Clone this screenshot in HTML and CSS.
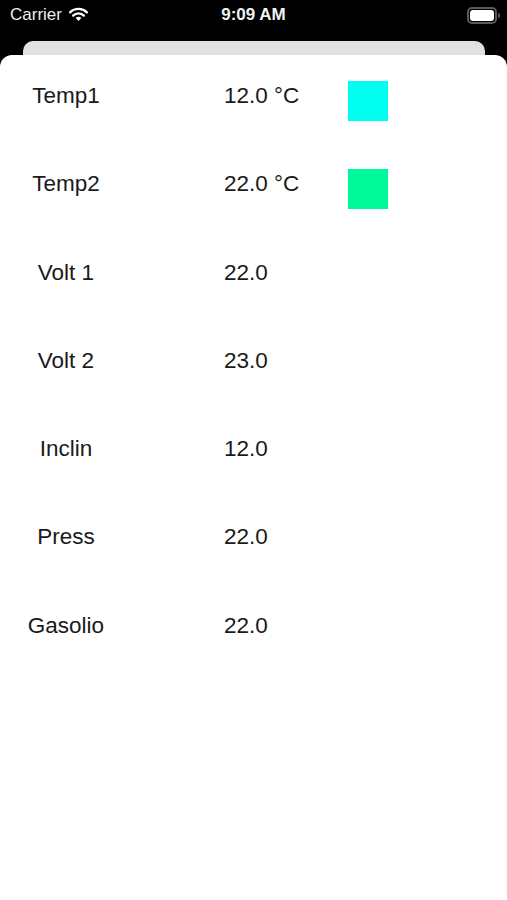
FILE: index.html
```html
<!DOCTYPE html>
<html>
<head>
<meta charset="utf-8">
<link rel="stylesheet" href="styles.css">
</head>
<body>
<div class="status">
  <div class="status-left">
    <span class="carrier">Carrier</span>
    <svg class="wifi" width="21" height="16" viewBox="0 0 20 15">
      <path d="M10 14.2 L7.3 11.4 A3.9 3.9 0 0 1 12.7 11.4 Z" fill="#fff"/>
      <path d="M4.9 9 A7.3 7.3 0 0 1 15.1 9" stroke="#fff" stroke-width="2.2" fill="none" stroke-linecap="round"/>
      <path d="M2 5.9 A11.4 11.4 0 0 1 18 5.9" stroke="#fff" stroke-width="2.2" fill="none" stroke-linecap="round"/>
    </svg>
  </div>
  <span class="time">9:09 AM</span>
  <div class="battery"><div class="battery-body"><div class="battery-fill"></div></div><div class="battery-nub"></div></div>
</div>
<div class="sheet-back"></div>
<div class="sheet">
  <div class="list">
    <div class="row"><span class="label">Temp1</span><span class="value">12.0 °C</span><span class="swatch cyan"></span></div>
    <div class="row"><span class="label">Temp2</span><span class="value">22.0 °C</span><span class="swatch green"></span></div>
    <div class="row"><span class="label">Volt 1</span><span class="value">22.0</span></div>
    <div class="row"><span class="label">Volt 2</span><span class="value">23.0</span></div>
    <div class="row"><span class="label">Inclin</span><span class="value">12.0</span></div>
    <div class="row"><span class="label">Press</span><span class="value">22.0</span></div>
    <div class="row"><span class="label">Gasolio</span><span class="value">22.0</span></div>
  </div>
</div>
</body>
</html>
```
FILE: styles.css
```css
html, body {
  margin: 0;
  padding: 0;
  background: #000;
  font-family: "Liberation Sans", Arial, sans-serif;
}
.status {
  height: 41px;
  display: flex;
  align-items: flex-start;
  justify-content: space-between;
  color: #fff;
  position: relative;
}
.status-left {
  display: flex;
  align-items: center;
  padding: 5px 0 0 10px;
  gap: 6px;
}
.carrier {
  font-size: 17px;
  line-height: 20px;
  color: #ececec;
}
.wifi {
  margin-top: -2px;
}
.time {
  position: absolute;
  left: 0;
  right: 0;
  top: 5px;
  text-align: center;
  font-size: 17px;
  font-weight: bold;
  line-height: 20px;
  color: #f2f2f2;
}
.battery {
  display: flex;
  align-items: center;
  padding: 7px 7px 0 0;
}
.battery-body {
  border: 2px solid #5a5a5a;
  border-radius: 5px;
  padding: 1px;
  box-sizing: content-box;
  width: 24px;
  height: 11px;
}
.battery-fill {
  width: 100%;
  height: 100%;
  background: #fff;
  border-radius: 3px;
}
.battery-nub {
  width: 2px;
  height: 5px;
  background: #5a5a5a;
  border-radius: 0 2px 2px 0;
  margin-left: 1px;
}
.sheet-back {
  height: 14px;
  margin: 0 22px 0 23px;
  background: #e1e1e1;
  border-radius: 10px 10px 0 0;
}
.sheet {
  background: #fff;
  border-radius: 12px 12px 0 0;
  min-height: 845px;
}
.list {
  padding-top: 21px;
  display: flex;
  flex-direction: column;
  gap: 48.3px;
}
.row {
  display: flex;
  align-items: flex-start;
  height: 40px;
  font-size: 22.5px;
  line-height: 40px;
  color: #1a1a1a;
}
.label {
  width: 132px;
  text-align: center;
}
.value {
  margin-left: 92px;
  width: 124px;
}
.swatch {
  width: 40px;
  height: 40px;
  margin-top: 5px;
}
.cyan { background: #00fff0; }
.green { background: #00fa9a; }
```
